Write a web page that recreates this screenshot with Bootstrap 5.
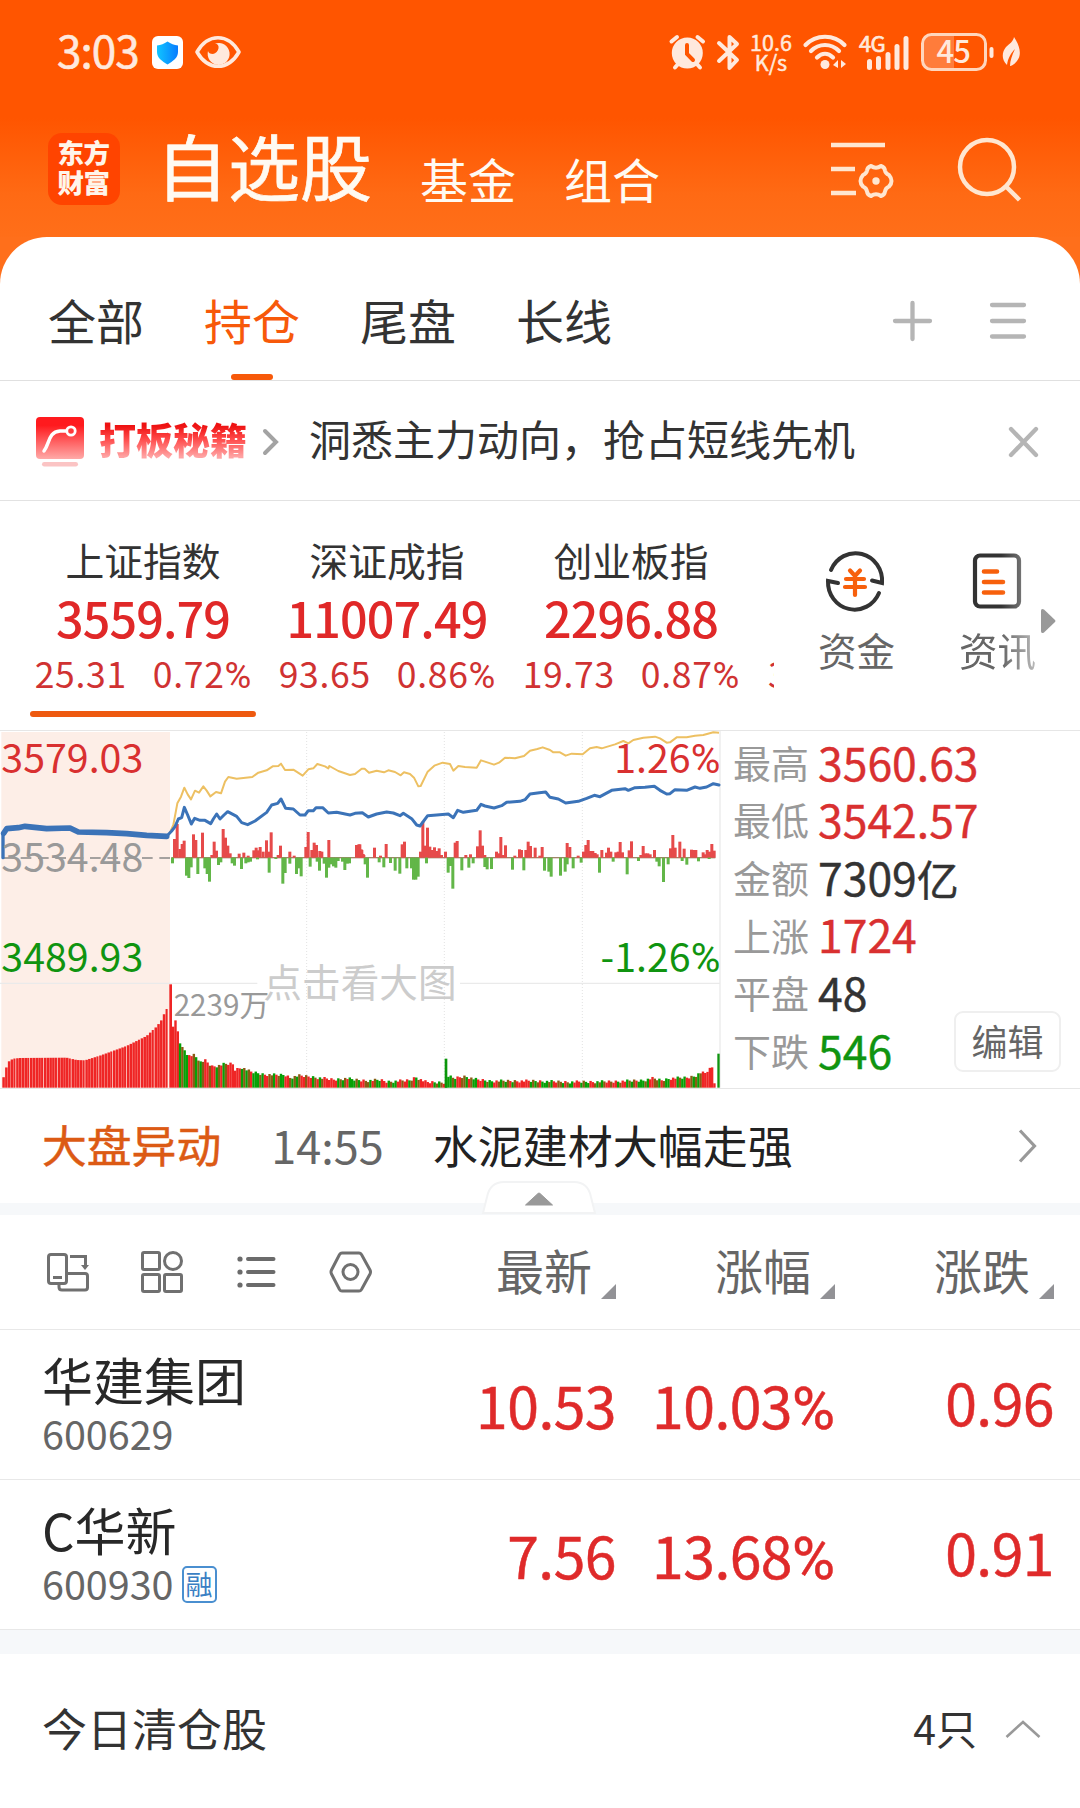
<!DOCTYPE html>
<html lang="zh-CN">
<head>
<meta charset="utf-8">
<meta name="viewport" content="width=device-width, initial-scale=1">
<title>自选股</title>
<link href="https://cdn.jsdelivr.net/npm/bootstrap@5.3.0/dist/css/bootstrap.min.css" rel="stylesheet">
<style>
  body{font-family:"Noto Sans CJK SC","Noto Sans",sans-serif;color:#333;line-height:1;background:#fff;font-size:42px;overflow:hidden}
  svg{display:block;flex:none;overflow:visible}
  .app{width:1080px;height:1808px;overflow:hidden;background:#fff}
  .topbar{background:linear-gradient(#f50 0,#f50 118px,#ff6a14 195px,#ff7420 290px);height:237px}
  .sheet{border-radius:47px 47px 0 0;background:#fff}
  .corner-back{background:#ff6f1b}
  .status{height:104px;padding:0 60px 0 57px;color:#ffe9dd}
  .clock{font-size:44px;letter-spacing:-.9px;width:88px;padding-bottom:6px;-webkit-text-stroke:.6px #ffe9dd}
  .speed{font-size:21.5px;line-height:19.5px;width:46px;margin:0 7px;padding-bottom:1px;-webkit-text-stroke:.5px #ffe9dd}
  .net4g{font-size:22px;letter-spacing:-.8px}
  .brand{height:133px;padding-left:48px;color:#fffaf2}
  .logo-box{width:72px;height:72px;border-radius:14px;background:#ff4400;font:900 26.5px/30px "Noto Sans CJK SC",sans-serif;margin-top:29px;padding:4px 0 0;color:#fff5ea}
  .t-main{font-size:72px;font-weight:400;margin:24px 0 0 36px;line-height:72px;-webkit-text-stroke:.7px #fffaf2}
  .t-sub{font-size:48px;line-height:48px;margin-top:50px}
  .tabs{height:144px;padding:0 48px;border-bottom:1px solid #e0e0e0}
  .tabs .nav-link{padding:0;color:#333;font-size:48px;line-height:1;height:143px;position:relative;padding-top:58px}
  .tabs .nav-link.active{color:#f7590a}
  .tabs .nav-link.active::after{content:"";position:absolute;left:27px;bottom:0;width:42px;height:6px;border-radius:3px;background:#f7590a}
  .promo{height:120px;padding:2px 42px 0 36px;border-bottom:1px solid #e2e2e2}
  .promo-title{font-weight:900;font-size:37px;background:linear-gradient(#ee1212 20%,#ff4a4a 50%,#ffa3a3 90%);-webkit-background-clip:text;background-clip:text;color:transparent;line-height:44px;margin:0 15px 5px 15px}
  .promo-text{font-size:42px;padding-bottom:7px;margin-left:29px}
  .indices{height:229px}
  .strip{width:774px;overflow:hidden;padding-left:21px}
  .idx{width:244px;flex:none;position:relative;padding-top:36px}
  .idx-name{font-size:38.8px;line-height:44px}
  .idx-val{font-size:48.5px;font-weight:500;line-height:50px;letter-spacing:-.9px;color:#e02828;margin-top:11px}
  .idx-chg{font-size:35.5px;line-height:36px;letter-spacing:.7px;color:#d03232;margin-top:13px;gap:26px}
  .pct{font-family:Roboto,sans-serif;font-size:1.03em;letter-spacing:0}
  .idx.active::after{content:"";position:absolute;left:9px;top:210px;width:226px;height:6px;border-radius:3px;background:#ee590f}
  .tool{font-size:38.5px;color:#666;padding-top:49px;line-height:40px}
  .tool svg{margin-bottom:17px}
  .market{height:359px;border-top:1px solid #e6e6e6;border-bottom:1px solid #e6e6e6}
  .stat{height:57.6px;font-size:38px;color:#999;white-space:nowrap}
  .stat b{font-weight:400;font-size:44.5px;letter-spacing:0;margin-left:9px;color:#333;-webkit-text-stroke:.4px}
  .stat b.up{color:#d93030}.stat b.down{color:#109410}
  .up{color:#df2a2a}
  .edit{right:19px;bottom:16px;width:107px;height:61px;border:2px solid #efefef;border-radius:9px;font-size:36px;color:#666;background:#fff;padding-bottom:4px}
  .news{height:114px;padding:2px 43px 0 42px}
  .band{background:#f6f8fa}
  .cols{height:115px;border-bottom:1px solid #e8e8e8;color:#666;padding-left:47px;padding-right:26px}
  .colhead{width:219px;font-size:48px}
  .colhead svg{margin:39px 0 0 9px}
  .quote{height:150px;border-bottom:1px solid #e8e8e8;padding:0 26px 0 42px}
  .q-name{font-size:51px;line-height:51px;color:#282828;margin-top:24px}
  .q-code{font-size:39.5px;line-height:40px;color:#666;margin-top:8px}
  .q-val{font-size:57px;letter-spacing:-.5px;width:219px;text-align:right;padding-top:44px;line-height:60px;white-space:nowrap;-webkit-text-stroke:.5px}
  .rong{font-size:27px;border:2px solid #4a8fd0;border-radius:5px;color:#3a7fc4;width:35px;height:37px;line-height:32px;margin:3px 0 0 8px}
  .cleared{height:152px;padding:0 39px 0 42px;font-size:45px}
</style>
</head>
<body>
<main class="app d-flex flex-column">
  <header class="topbar flex-shrink-0">
    <div class="status d-flex align-items-center">
      <span class="clock">3:03</span>
      <svg style="margin:0 12px 0 7px" width="31" height="33" viewBox="0 0 31 33"><defs><linearGradient id="sh"><stop stop-color="#11c5ff"/><stop offset="1" stop-color="#087cff"/></linearGradient></defs><rect width="31" height="33" rx="6" fill="#fff"/><path d="M15.500 5.500C19 8 22 9 26 9.500V16C26 22 21 25 15.500 28.500C10 25 5 22 5 16V9.500C9 9 12 8 15.500 5.500Z" fill="url(#sh)"/></svg>
      <svg width="46" height="32" viewBox="0 0 46 32"><path d="M2 16C13-3 33-3 44 16C33 35 13 35 2 16Z" fill="none" stroke="#ffe9dd" stroke-width="3.600" stroke-linejoin="round"/><path d="M13 15A11 11 0 1 0 20 7.500C26 8 24 17 18 18C15 18 13.500 17 13 15Z" fill="#ffe9dd"/></svg>
      <div class="d-flex align-items-center ms-auto">
        <svg width="37" height="36" viewBox="0 0 37 36"><g stroke="#ffe9dd" stroke-width="4" stroke-linecap="round"><path d="M2.500 7.500L8 3M34 7.500L28.500 3M6 33.500L10 29M31 33.500L27 29"/></g><circle cx="18.300" cy="19" r="15.500" fill="#ffe9dd"/><path d="M18 11V20L24 26" fill="none" stroke="#ff5500" stroke-width="4" stroke-linecap="round"/></svg>
        <svg style="margin-left:11px" width="24" height="37" viewBox="0 0 24 37"><path d="M2 9L20 26L12.500 34V3L20 10L2 27" fill="none" stroke="#ffe9dd" stroke-width="4" stroke-linejoin="round" stroke-linecap="round"/></svg>
        <div class="speed text-center">10.6<br>K/s</div>
        <svg style="margin-left:2px" width="45" height="36" viewBox="0 0 45 36"><g fill="none" stroke="#ffe9dd" stroke-width="4.200" stroke-linecap="round"><path d="M2.500 11C13 0 31 0 41.500 11M8 17C16 9 28 9 36 17M14 23.500C19 18.500 25 18.500 30 23.500"/></g><circle cx="22" cy="30.500" r="4.500" fill="#ffe9dd"/><path d="M35 26V34L30 31ZM38 26V34L43 30Z" fill="#ffe9dd"/></svg>
        <svg style="margin-left:11px" width="52" height="37" viewBox="0 0 52 37" fill="#ffe9dd"><text class="net4g" x="0" y="17.500" stroke="#ffe9dd" stroke-width=".7">4G</text><rect x="8" y="25" width="5" height="11" rx="2.500"/><rect x="17" y="22" width="5" height="14" rx="2.500"/><rect x="26.500" y="18" width="5" height="18" rx="2.500"/><rect x="35.500" y="10" width="5" height="26" rx="2.500"/><rect x="44.500" y="2" width="5" height="34" rx="2.500"/></svg>
        <svg style="margin-left:10px" width="75" height="38" viewBox="0 0 75 38"><path d="M11 2H33V36H11Q2 36 2 27V11Q2 2 11 2Z" fill="#ff7c3b"/><rect x="1.500" y="1.500" width="63" height="35" rx="9" fill="none" stroke="#ffd6bd" stroke-width="3"/><rect x="68.500" y="14" width="4" height="11" rx="2" fill="#ffe9dd"/><text x="15.500" y="30" font-size="31" font-weight="500" letter-spacing="-.8" fill="#ffe9dd">45</text></svg>
        <svg style="margin-left:6px" width="18" height="30" viewBox="0 0 18 30"><path d="M12 0C18 9 20 18 15 24C12 28 9 29 8 29C8 24 10 18 13 12C9 16 6 21 5 28C-1 22 0 15 4 10C8 6 11 5 12 0Z" fill="#ffe9dd"/></svg>
      </div>
    </div>
    <nav class="brand d-flex align-items-start">
      <div class="logo-box text-center flex-shrink-0"><div style="letter-spacing:-.5px;margin-right:1px">东方<br>财富</div></div>
      <h1 class="t-main mb-0">自选股</h1>
      <span class="t-sub" style="margin-left:48px">基金</span>
      <span class="t-sub" style="margin-left:48px">组合</span>
      <svg style="margin:36px 0 0 171px" width="64" height="60" viewBox="0 0 64 60" fill="none" stroke="#ffe6d0" stroke-width="4.500"><path d="M0 5H54M0 29H24M0 53H25"/><path d="M40 26Q45 29.500 50 26Q53.500 27 54 30.500Q54.500 33.500 58 35Q60.500 38 60.500 41Q60.500 44 58 46.500Q54.500 48 54 51.500Q53.500 55 50 56Q45 52.500 40 56Q36.500 55 36 51.500Q35.500 48 32 46.500Q29.500 44 29.500 41Q29.500 38 32 35Q35.500 33.500 36 30.500Q36.500 27 40 26Z" stroke-width="4" stroke-linejoin="round"/><circle cx="45" cy="41" r="3.700" fill="#ffe6d0" stroke="none"/></svg>
      <svg style="margin:33px 0 0 63px" width="66" height="66" viewBox="0 0 66 66" fill="none" stroke="#ffe6d0" stroke-width="4.500"><circle cx="29" cy="30" r="27"/><path d="M47.500 49L61.500 63"/></svg>
    </nav>
  </header>

  <div class="corner-back"><section class="sheet">
    <nav class="tabs d-flex align-items-center">
      <div class="nav flex-nowrap" style="gap:60px">
        <a class="nav-link">全部</a><a class="nav-link active">持仓</a><a class="nav-link">尾盘</a><a class="nav-link">长线</a>
      </div>
      <svg class="ms-auto" style="margin-bottom:-25px;margin-right:58px" width="39" height="40" viewBox="0 0 39 40"><path d="M2 20H37M19.500 2V38" stroke="#b5b5b5" stroke-width="4.300" stroke-linecap="round"/></svg>
      <svg style="margin-bottom:-25px;margin-right:6px" width="36" height="40" viewBox="0 0 36 40"><path d="M2 4H34M2 20H34M2 35.500H34" stroke="#b5b5b5" stroke-width="4.300" stroke-linecap="round"/></svg>
    </nav>
    <div class="promo d-flex align-items-center">
      <svg width="48" height="50" viewBox="0 0 48 50"><defs><linearGradient id="pg" x2="0" y2="1"><stop offset=".2" stop-color="#ff1a1e"/><stop offset="1" stop-color="#ffaaa8"/></linearGradient></defs><rect width="48" height="42" rx="4" fill="url(#pg)"/><path d="M8 34C14 26 12 15 24 14H31" fill="none" stroke="#fff" stroke-width="3.500" stroke-linecap="round"/><circle cx="35" cy="14" r="4.200" fill="#ff3a3c" stroke="#fff" stroke-width="2.800"/><rect x="6" y="45" width="36" height="4.500" rx="2.200" fill="#fbc4c4"/></svg>
      <span class="promo-title">打板秘籍</span>
      <svg width="18" height="28" viewBox="0 0 18 28"><path d="M3 3L14 14L3 25" fill="none" stroke="#a3a3a3" stroke-width="4" stroke-linecap="round"/></svg>
      <span class="promo-text">洞悉主力动向，抢占短线先机</span>
      <svg class="ms-auto" width="29" height="30" viewBox="0 0 29 30"><path d="M2 2L27 28M27 2L2 28" stroke="#b5b5b5" stroke-width="4.300" stroke-linecap="round"/></svg>
    </div>
  </section></div>

  <section class="indices d-flex flex-shrink-0">
    <div class="strip d-flex text-center flex-shrink-0">
      <div class="idx active"><div class="idx-name">上证指数</div><div class="idx-val">3559.79</div><div class="idx-chg d-flex justify-content-center"><span>25.31</span><span>0.72<span class="pct">%</span></span></div></div>
      <div class="idx"><div class="idx-name">深证成指</div><div class="idx-val">11007.49</div><div class="idx-chg d-flex justify-content-center"><span>93.65</span><span>0.86<span class="pct">%</span></span></div></div>
      <div class="idx"><div class="idx-name">创业板指</div><div class="idx-val">2296.88</div><div class="idx-chg d-flex justify-content-center"><span>19.73</span><span>0.87<span class="pct">%</span></span></div></div>
      <div class="idx text-start" style="padding-left:15px"><div class="idx-name">&nbsp;</div><div class="idx-val">&nbsp;</div><div class="idx-chg">3</div></div>
    </div>
    <div class="tool text-center" style="margin-left:44px">
      <svg style="margin-left:7px" width="60" height="62" viewBox="0 0 60 62" fill="none" stroke-linecap="round"><g stroke="#333" stroke-width="4"><path d="M6 20A26.600 27.500 0 0 1 57 33L47 30.500"/><path d="M54 43A26.600 27.500 0 0 1 3 31L13 33"/></g><g stroke="#f7600c" stroke-width="4.200"><path d="M25 20.500L30 26L35 20.500M21 29H39M20 37H40M30 27V45"/></g></svg>
      资金
    </div>
    <div class="tool text-center" style="margin-left:64px;-webkit-mask-image:linear-gradient(90deg,#000 55%,rgba(0,0,0,.45) 100%);mask-image:linear-gradient(90deg,#000 55%,rgba(0,0,0,.45) 100%)">
      <svg style="margin-left:13px" width="50" height="62" viewBox="0 0 50 62" fill="none"><rect x="3" y="5.500" width="44" height="51" rx="5" stroke="#333" stroke-width="4.200"/><path d="M12 21.500H25M12 32H31M12 42.500H31" stroke="#f7600c" stroke-width="4.600" stroke-linecap="round"/></svg>
      资讯
    </div>
    <svg style="margin:107px 0 0 4px" width="17" height="26" viewBox="0 0 17 26"><path d="M1 3Q1 0 4 1.500L15 12Q16 13 15 14L4 24.500Q1 26 1 23Z" fill="#999"/></svg>
  </section>

  <section class="market d-flex position-relative flex-shrink-0">
    <svg id="chart" width="722" height="357" viewBox="0 18 2166 1071">
      <rect x="4" y="21" width="506" height="1067" fill="#fdeee7"/>
      <g stroke="#e2e2e2" stroke-width="3" stroke-dasharray="3 6"><path d="M920 21V1086M1333 21V1086M1747 21V1086"/></g>
      <path d="M0 775H772M1380 775H2160M2160 18V1088" stroke="#eaeaea" stroke-width="4" fill="none"/>
      <g id="vol"></g>
      <g id="flow"></g>
      <path d="M10 399H510" stroke="#888" stroke-width="5" stroke-dasharray="32 20"/>
      <path fill="none" stroke="#edc062" stroke-width="6" stroke-linejoin="round" d="M510 322L520 300 532 235 543 215 553 188 563 208 573 223 585 197 597 203 610 184 620 197 631 214 648 201 663 205 675 170 685 156 710 161 757 156 775 143 800 136 818 124 835 123 843 116 855 135 880 134 908 152 925 133 940 130 952 117 975 124 985 130 988 123 1015 138 1050 150 1065 147 1085 131 1094 131 1107 143 1130 137 1152 142 1165 136 1185 141 1202 151 1212 142 1230 147 1242 158 1255 184 1262 183 1283 140 1303 122 1328 113 1350 117 1360 137 1375 123 1395 126 1430 128 1443 106 1455 110 1482 119 1497 113 1515 98 1545 100 1572 93 1590 77 1612 72 1628 67 1650 75 1660 82 1680 82 1697 92 1715 86 1748 88 1770 70 1790 66 1805 70 1845 58 1870 48 1885 55 1900 45 1930 38 1965 35 1980 40 2000 53 2010 52 2030 37 2060 37 2085 32 2110 30 2140 22 2157 23"/>
      <g fill="none" stroke="#3b73b8" stroke-linejoin="round" stroke-linecap="round"><path stroke-width="10" d="M9 398V325"/><path stroke-width="17" d="M11 325L20 311 55 308 75 304 140 311 210 309 235 321 320 323 380 326 440 331 500 334"/><path stroke-width="9" d="M500 334L515 318 525 305 535 282 545 278 553 247 563 270 574 297 584 280 600 286 615 286 632 296 640 282 650 267 660 282 672 270 683 260 710 274 725 293 743 299 765 288 800 262 815 240 833 235 843 222 857 250 880 252 900 270 915 270 925 257 940 257 948 248 968 248 985 264 1010 262 1050 270 1065 265 1087 263 1105 276 1130 267 1160 261 1180 264 1200 272 1210 265 1235 281 1250 300 1260 303 1283 272 1310 270 1345 267 1360 278 1373 256 1390 262 1430 256 1443 238 1455 243 1482 249 1505 242 1520 232 1560 229 1575 224 1590 207 1618 203 1637 201 1650 217 1675 222 1697 234 1735 229 1760 220 1783 211 1800 215 1835 196 1875 191 1885 196 1905 188 1935 187 1963 184 1980 196 2000 207 2010 206 2025 194 2060 196 2085 186 2100 190 2120 186 2140 176 2157 180"/></g>
      <g font-size="118"><text x="4" y="144" fill="#d93030">3579.03</text><text x="4" y="441" fill="#999">3534.48</text><text x="4" y="741" fill="#109410">3489.93</text>
      <text x="2161" y="144" text-anchor="end" fill="#d93030">1.26<tspan class="pct">%</tspan></text><text x="2161" y="741" text-anchor="end" fill="#109410">-1.26<tspan class="pct">%</tspan></text></g>
      <text x="521" y="873" font-size="89" fill="#999">2239万</text>
      <text x="790" y="815" font-size="116" fill="#ccc">点击看大图</text>
    </svg>
    <div class="d-flex flex-column" style="padding:2px 0 0 11px">
      <div class="stat d-flex align-items-center">最高<b class="up">3560.63</b></div>
      <div class="stat d-flex align-items-center">最低<b class="up">3542.57</b></div>
      <div class="stat d-flex align-items-center">金额<b>7309<span style="font-size:42px">亿</span></b></div>
      <div class="stat d-flex align-items-center">上涨<b class="up">1724</b></div>
      <div class="stat d-flex align-items-center">平盘<b>48</b></div>
      <div class="stat d-flex align-items-center">下跌<b class="down">546</b></div>
    </div>
    <div class="edit position-absolute d-flex align-items-center justify-content-center">编辑</div>
  </section>

  <section class="news d-flex align-items-center flex-shrink-0">
    <span style="font-size:44.800px;color:#dc5a14;padding-bottom:5px;-webkit-text-stroke:.5px">大盘异动</span>
    <span style="font-size:45px;color:#666;padding-bottom:5px;margin-left:50px">14:55</span>
    <span style="font-size:45px;color:#222;padding-bottom:5px;margin-left:49px">水泥建材大幅走强</span>
    <svg class="ms-auto" style="margin-bottom:2px" width="20" height="36" viewBox="0 0 20 36"><path d="M3 2.500L17.500 18L3 33.500" fill="none" stroke="#999" stroke-width="3.200"/></svg>
  </section>
  <div class="band position-relative flex-shrink-0" style="height:12px">
    <svg class="position-absolute" style="left:482px;bottom:1px" width="114" height="34" viewBox="0 0 114 34"><path d="M1 33L5 17Q8 2 22 2H92Q106 2 109 17L113 33Z" fill="#fff" stroke="#f2f3f4" stroke-width="2"/><path d="M43.500 25L56 13.500Q57 12.500 58 13.500L70.500 25Z" fill="#999" stroke="#999" stroke-linejoin="round"/></svg>
  </div>

  <section class="cols d-flex align-items-center flex-shrink-0">
    <svg width="42" height="42" viewBox="0 0 42 42" fill="none" stroke="#707070" stroke-width="3"><rect x="1.500" y="3.500" width="18" height="29" rx="2.500"/><path d="M6 26.500H15M20 22.500H38Q40.500 22.500 40.500 25V36.500Q40.500 39 38 39H15Q12 39 12 36V33M23 5.500H38.500V15"/><path d="M34 14H42L38 19Z" fill="#707070" stroke="none"/></svg>
    <svg style="margin-left:52px" width="42" height="42" viewBox="0 0 42 42" fill="none" stroke="#707070" stroke-width="3"><rect x="1.500" y="1.500" width="17" height="17" rx="1.500"/><circle cx="32" cy="10" r="8.500"/><rect x="1.500" y="23.500" width="17" height="17" rx="1.500"/><rect x="23.500" y="23.500" width="17" height="17" rx="1.500"/></svg>
    <svg style="margin-left:54px" width="40" height="42" viewBox="0 0 40 42"><path d="M11 8H36.500M11 21H36.500M11 34H36.500" stroke="#6b6b6b" stroke-width="4" stroke-linecap="round"/><g fill="#6b6b6b"><circle cx="3" cy="8" r="2.600"/><circle cx="3" cy="21" r="2.600"/><circle cx="3" cy="34" r="2.600"/></g></svg>
    <svg style="margin-left:52px" width="44" height="42" viewBox="0 0 44 42" fill="none" stroke="#707070" stroke-width="3"><path d="M13 2H30Q31.500 2 32.500 3.500L41 19Q42 21 41 23L32.500 38.500Q31.500 40 30 40H13Q11.500 40 10.500 38.500L2.500 23Q1.500 21 2.500 19L10.500 3.500Q11.500 2 13 2Z"/><circle cx="21.500" cy="21" r="7.500"/></svg>
    <div class="d-flex ms-auto">
      <div class="colhead d-flex justify-content-end">最新<svg width="15" height="15"><path d="M15 0V15H0Z" fill="#929296"/></svg></div>
      <div class="colhead d-flex justify-content-end">涨幅<svg width="15" height="15"><path d="M15 0V15H0Z" fill="#929296"/></svg></div>
      <div class="colhead d-flex justify-content-end">涨跌<svg width="15" height="15"><path d="M15 0V15H0Z" fill="#929296"/></svg></div>
    </div>
  </section>

  <section class="quote d-flex flex-shrink-0">
    <div class="me-auto"><div class="q-name">华建集团</div><div class="q-code">600629</div></div>
    <div class="q-val up">10.53</div><div class="q-val up">10.03<span class="pct">%</span></div><div class="q-val up" style="padding-top:41px">0.96</div>
  </section>
  <section class="quote d-flex flex-shrink-0">
    <div class="me-auto"><div class="q-name">C华新</div><div class="q-code d-flex">600930<span class="rong text-center">融</span></div></div>
    <div class="q-val up">7.56</div><div class="q-val up">13.68<span class="pct">%</span></div><div class="q-val up" style="padding-top:41px">0.91</div>
  </section>
  <div class="band flex-shrink-0" style="height:24px"></div>
  <section class="cleared d-flex align-items-center flex-shrink-0">
    <span style="padding-bottom:6px">今日清仓股</span>
    <span class="ms-auto" style="font-size:41px;padding-bottom:5px">4只</span>
    <svg style="margin-left:28px;margin-bottom:3px" width="36" height="20" viewBox="0 0 36 20"><path d="M1.500 18L18 3L34.500 18" fill="none" stroke="#999" stroke-width="2.600"/></svg>
  </section>
</main>
<script src="https://cdn.jsdelivr.net/npm/bootstrap@5.3.0/dist/js/bootstrap.bundle.min.js"></script>
<script>
  // Bars are listed as x:y pairs in chart units; 398 is the zero line.
  const flowA = "524:342 532:297 540:372 547:357 553:347 581:328 588:345 608:323 636:390 643:350 650:377 670:312 677:338 684:362 691:385 718:386 732:383 745:392 762:376 769:368 775:376 781:366 790:380 800:346 808:380 814:322 835:390 842:362 870:380 883:392 918:366 925:321 936:375 943:353 950:360 960:378 966:380 987:345 1070:360 1077:358 1084:373 1090:387 518:415 560:452 567:459 574:427 594:447 615:430 622:447 629:470 656:420 663:412 697:415 704:422 725:432 738:415 745:412 752:410 773:403 808:443 828:402 849:476 856:444 870:416 890:447 897:430 904:454 931:425 952:410 959:437 973:416 980:458 987:428 994:418 1001:424 1008:428 1015:408 1028:410 1035:435 1042:416 1049:415";
  const flowB = "0:358 6:375 12:390 44:368 62:392 79:357 127:358 134:350 182:380 189:290 196:362 203:308 210:365 217:375 224:367 231:378 238:370 245:390 257:380 286:353 292:348 318:390 332:388 353:364 361:316 368:362 375:390 410:380 417:385 423:336 430:390 437:361 465:392 479:373 485:375 498:375 505:350 512:363 526:368 540:392 547:366 622:354 630:366 655:392 671:380 678:360 685:345 692:378 699:378 706:384 712:388 726:375 740:383 746:368 753:380 768:382 775:380 781:351 788:382 808:376 815:349 843:390 850:363 857:385 864:385 871:388 884:375 932:370 939:330 946:368 960:350 973:371 995:374 1002:375 1008:375 1030:382 1036:388 1042:375 1049:380 1056:357 1063:377 16:418 23:458 58:412 72:427 92:414 106:437 120:446 141:430 155:430 161:464 168:464 175:455 200:415 265:443 272:423 279:491 306:436 327:428 340:415 375:426 382:433 395:432 458:434 492:436 554:437 567:440 574:455 602:452 616:440 622:418 640:430 664:413 719:443 760:410 802:448 836:408 891:410 898:424 911:471 925:418 967:408 981:419 1016:409 1048:402";
  const parse = (s, dx) => s.split(" ").map(p => { const [x, y] = p.split(":").map(Number); return [x + dx, y]; });
  const bar = (x, y0, y1, w, c) => `<rect x="${x}" y="${Math.min(y0, y1)}" width="${w}" height="${Math.abs(y1 - y0)}" fill="${c}"/>`;
  let out = bar(514, 396, 400, 1632, "#a08468");
  for (const [x, y] of parse(flowA, 0).concat(parse(flowB, 1080))) out += bar(x - 5, 398, y, 9, y < 398 ? "#e64a4a" : "#62b648");
  document.getElementById("flow").innerHTML = out;

  const env = parse("6:1060 12:1056 19:1028 28:1008 40:1001 60:999 200:998 230:1005 255:1006 300:992 380:963 440:933 470:905 485:885 500:850 519:905 525:882 532:915 540:957 553:975 560:990 585:988 595:1012 615:1006 635:1024 655:1022 670:1018 697:1016 705:1034 725:1027 750:1040 790:1048 830:1050 855:1050 870:1058 895:1052 930:1055 1000:1064 1040:1060 1060:1064 1100:1067 1140:1065 1160:1070 1230:1066 1247:1056 1262:1064 1280:1072 1335:1072 1345:1053 1360:1060 1395:1054 1430:1064 1470:1068 1600:1068 1700:1071 1830:1070 1930:1066 1955:1060 1985:1066 2010:1060 2060:1058 2085:1053 2100:1043 2115:1045 2125:1035 2136:1027 2144:1080", 0);
  const level = x => { let i = 1; while (i < env.length - 1 && env[i][0] < x) i++; const a = env[i - 1], b = env[i]; return a[1] + (b[1] - a[1]) * (x - a[0]) / (b[0] - a[0]); };
  out = "";
  for (let x = 7, i = 0; x < 504; x += 8.3, i++) out += bar(x, level(x + 4), 1088, i % 5 === 4 ? 6.2 : 7.6, "#ef2525");
  out += bar(508, 778, 1088, 8, "#ef2525");
  const hues = "rrrgbggrrbgbgbrrbrrgbrgbrrrrrrgbgbrgggbgrrbbgrbgg";
  const pal = { r: "#ef2525", g: "#06a006", b: "#8a5c14" };
  for (let x = 516, i = 0; x < 2142; x += 6.88, i++) {
    const wob = x < 560 ? 0 : ((i * 37) % 11 - 5) * .9;
    out += bar(x, level(x + 3) + wob, 1088, 7.2, x > 2118 ? pal.r : pal[hues[(i + Math.floor(i / 49) * 7) % 49]]);
  }
  out += bar(1334, 1001, 1088, 8, "#0a960a") + bar(2152, 986, 1088, 7, "#109410");
  document.getElementById("vol").innerHTML = out;
</script>
</body>
</html>
